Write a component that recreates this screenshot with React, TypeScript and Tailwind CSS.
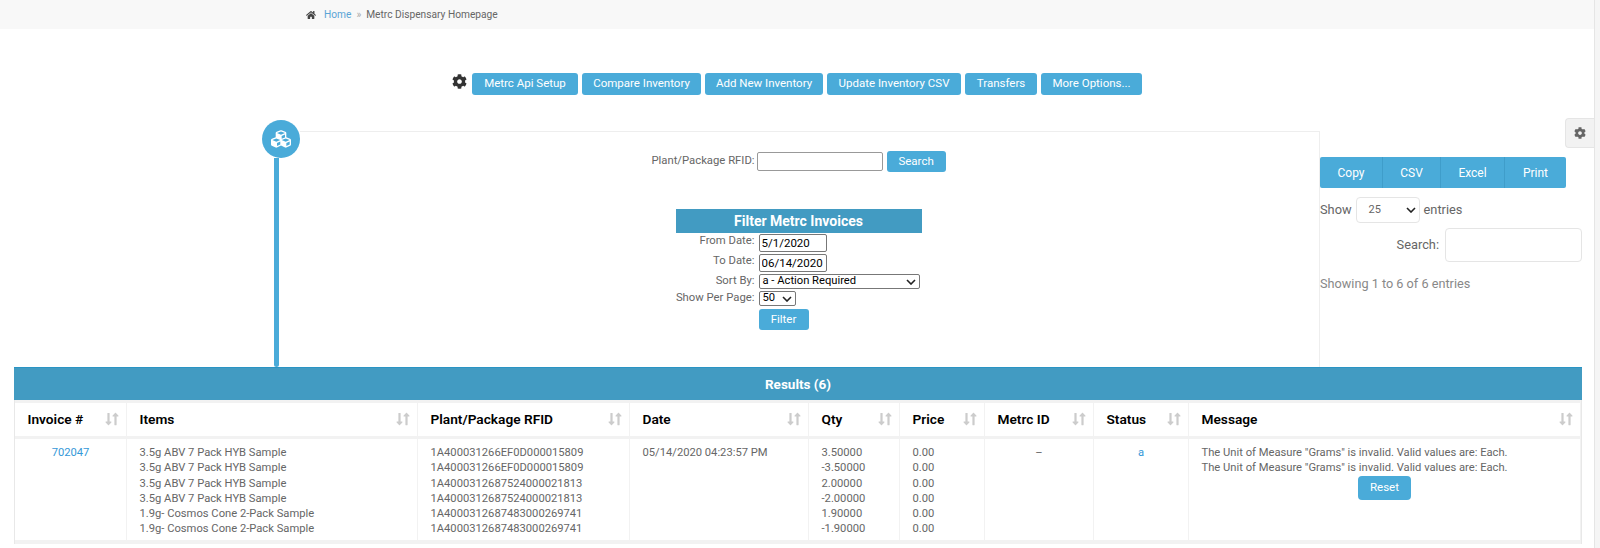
import { FaCog, FaCubes, FaHome, FaLongArrowAltDown, FaLongArrowAltUp } from "react-icons/fa";

const toolbarButtons = [
  { label: "Metrc Api Setup", width: "w-[106px]" },
  { label: "Compare Inventory", width: "w-[119px]" },
  { label: "Add New Inventory", width: "w-[118px]" },
  { label: "Update Inventory CSV", width: "w-[134px]" },
  { label: "Transfers", width: "w-[72px]" },
  { label: "More Options...", width: "w-[101px]" },
];

const exportButtons = [
  { label: "Copy", width: "w-[63px]" },
  { label: "CSV", width: "w-[58px]" },
  { label: "Excel", width: "w-[64px]" },
  { label: "Print", width: "w-[61px]" },
];

const columns = [
  { label: "Invoice #", width: "w-[112px]" },
  { label: "Items", width: "w-[291px]" },
  { label: "Plant/Package RFID", width: "w-[212px]" },
  { label: "Date", width: "w-[179px]" },
  { label: "Qty", width: "w-[91px]" },
  { label: "Price", width: "w-[85px]" },
  { label: "Metrc ID", width: "w-[109px]" },
  { label: "Status", width: "w-[95px]" },
  { label: "Message", width: "w-[392px]" },
];

const lines = [
  { item: "3.5g ABV 7 Pack HYB Sample", rfid: "1A400031266EF0D000015809", qty: "3.50000" },
  { item: "3.5g ABV 7 Pack HYB Sample", rfid: "1A400031266EF0D000015809", qty: "-3.50000" },
  { item: "3.5g ABV 7 Pack HYB Sample", rfid: "1A4000312687524000021813", qty: "2.00000" },
  { item: "3.5g ABV 7 Pack HYB Sample", rfid: "1A4000312687524000021813", qty: "-2.00000" },
  { item: "1.9g- Cosmos Cone 2-Pack Sample", rfid: "1A4000312687483000269741", qty: "1.90000" },
  { item: "1.9g- Cosmos Cone 2-Pack Sample", rfid: "1A4000312687483000269741", qty: "-1.90000" },
];

const message = 'The Unit of Measure "Grams" is invalid. Valid values are: Each.';
const cell = "h-[105px] border-b-[4px] border-r border-[#f2f2f2] align-top pt-[6px] px-[12.5px]";
const label = "justify-self-end whitespace-nowrap leading-[13px]";
const dateInput = "mb-[2px] h-[18px] w-[68px] rounded-[2px] border border-[#777] px-[2px] text-[11.5px] text-black";

export default function App() {
  return (
    <div className="flex h-[548px] w-[1600px] overflow-hidden bg-white font-['Roboto',sans-serif] text-[#666]">
      <div className="relative w-[1594px] shrink-0">
        {/* breadcrumb */}
        <div className="flex h-[29px] items-center bg-[#f8f8f8] pl-[306px] text-[10.2px]">
          <FaHome className="h-[10px] w-[10px] text-[#444]" />
          <a className="ml-[8px] text-[#5aa5d6]">Home</a>
          <span className="mx-[5px] text-[#aaa]">»</span>
          <span>Metrc Dispensary Homepage</span>
        </div>

        {/* toolbar */}
        <div className="mt-[44px] flex h-[22px] items-start justify-center gap-[4px]">
          <FaCog className="mr-[1px] mt-[1px] h-[15px] w-[15px] text-[#333]" />
          {toolbarButtons.map((b) => (
            <button key={b.label} className={`h-[22px] rounded-[3px] bg-[#4aabd9] text-[11.5px] font-normal text-white ${b.width}`}>
              {b.label}
            </button>
          ))}
        </div>

        {/* main */}
        <div className="mt-[25px] flex h-[247px]">
          <div className="ml-[262px] flex w-[38px] shrink-0 flex-col">
            <div className="flex h-[38px] w-[38px] items-center justify-center rounded-full bg-[#4aabd9]">
              <FaCubes className="h-[20px] w-[20px] text-white" />
            </div>
            <div className="ml-[12px] w-[5px] flex-1 rounded-b-[3px] bg-[#4aabd9]" />
          </div>

          <div className="mt-[11px] flex w-[1020px] shrink-0 flex-col items-center border-r border-t border-[#eeeeee] pr-[22px] pt-[19px] text-[11.3px]">
            <div className="flex items-center">
              <span>Plant/Package RFID:</span>
              <input className="ml-[2px] h-[19px] w-[126px] rounded-[2px] border border-[#999] bg-white" />
              <button className="ml-[4px] h-[21px] w-[59px] rounded-[3px] bg-[#4aabd9] text-[11.5px] font-normal text-white">Search</button>
            </div>

            <div className="mt-[37px] w-[246px]">
              <div className="flex h-[24px] items-center justify-center bg-[#429bc2] text-[14px] font-bold text-white">
                Filter Metrc Invoices
              </div>
              <div className="grid grid-cols-[79px_1fr] gap-x-[4px] pt-[1px]">
                <label className={label}>From Date:</label>
                <input readOnly value="5/1/2020" className={dateInput} />
                <label className={label}>To Date:</label>
                <input readOnly value="06/14/2020" className={dateInput} />
                <label className={label}>Sort By:</label>
                <div className="mb-[2px] flex h-[15px] w-[161px] items-center justify-between rounded-[2px] border border-[#777] px-[3px] text-[11.2px] text-black">
                  <span>a - Action Required</span>
                  <Chevron />
                </div>
                <label className={label}>Show Per Page:</label>
                <div className="flex h-[15px] w-[37px] items-center justify-between rounded-[2px] border border-[#777] px-[3px] text-[11.2px] text-black">
                  <span>50</span>
                  <Chevron />
                </div>
                <div />
                <button className="mt-[3px] h-[21px] w-[50px] rounded-[3px] bg-[#4aabd9] text-[11.5px] font-normal text-white">Filter</button>
              </div>
            </div>
          </div>

          <div className="mt-[37px] w-[262px] shrink-0 text-[12.8px]">
            <div className="flex h-[31px] w-[246px] overflow-hidden rounded-[2px] bg-[#4aabd9]">
              {exportButtons.map((b) => (
                <button key={b.label} className={`border-r border-[#3f9dca] text-[12px] font-normal text-white last:border-r-0 ${b.width}`}>
                  {b.label}
                </button>
              ))}
            </div>
            <div className="mt-[9px] flex items-center">
              <span>Show</span>
              <div className="mx-[4px] flex h-[26px] w-[64px] items-center justify-between rounded-[4px] border border-[#e5e5e5] pl-[12px] pr-[3px] text-[11px]">
                <span>25</span>
                <Chevron />
              </div>
              <span>entries</span>
            </div>
            <div className="mt-[5px] flex items-center justify-end">
              <span className="mr-[6px]">Search:</span>
              <input className="h-[34px] w-[137px] rounded-[4px] border border-[#e5e5e5]" />
            </div>
            <div className="mt-[12px] text-[12.7px] text-[#888]">Showing 1 to 6 of 6 entries</div>
          </div>
        </div>

        {/* results */}
        <div className="ml-[14px] w-[1568px]">
          <div className="flex h-[33px] items-center justify-center border-t border-[#2a94c4] bg-[#429bc2] text-[13.5px] font-bold text-white">
            Results (6)
          </div>
          <table className="w-full table-fixed border-separate border-spacing-0 border-x border-[#e8e8e8]">
            <thead>
              <tr>
                {columns.map((c) => (
                  <th key={c.label} className={`h-[39px] border-y-[3px] border-r border-[#f2f2f2] px-[12.5px] text-left text-[13.7px] font-semibold text-black ${c.width}`}>
                    <div className="flex items-center justify-between">
                      <span>{c.label}</span>
                      <span className="-mr-[5px] flex text-[#ccc]">
                        <FaLongArrowAltDown className="h-[16px] w-[7px]" />
                        <FaLongArrowAltUp className="h-[16px] w-[7px]" />
                      </span>
                    </div>
                  </th>
                ))}
              </tr>
            </thead>
            <tbody className="text-[11.2px] leading-[15.3px]">
              <tr>
                <td className={`${cell} text-center text-[#3498d8]`}>702047</td>
                <td className={cell}>{lines.map((l, i) => <div key={i}>{l.item}</div>)}</td>
                <td className={cell}>{lines.map((l, i) => <div key={i}>{l.rfid}</div>)}</td>
                <td className={cell}>05/14/2020 04:23:57 PM</td>
                <td className={cell}>{lines.map((l, i) => <div key={i}>{l.qty}</div>)}</td>
                <td className={cell}>{lines.map((l, i) => <div key={i}>0.00</div>)}</td>
                <td className={`${cell} text-center`}>–</td>
                <td className={`${cell} text-center text-[#3498d8]`}>a</td>
                <td className={cell}>
                  <div>{message}</div>
                  <div>{message}</div>
                  <div className="text-center">
                    <button className="h-[24px] w-[53px] rounded-[4px] bg-[#4aabd9] text-[11.5px] font-normal text-white">Reset</button>
                  </div>
                </td>
              </tr>
            </tbody>
          </table>
        </div>

        {/* settings tab */}
        <div className="absolute right-0 top-[118px] flex h-[30px] w-[29px] items-center justify-center rounded-l-[4px] border border-r-0 border-[#e5e5e5] bg-[#f2f2f2]">
          <FaCog className="h-[12px] w-[12px] text-[#666]" />
        </div>
      </div>
      <div className="flex-1 border-l border-[#e5e5e5] bg-[#f5f5f5]" />
    </div>
  );
}

function Chevron() {
  return (
    <svg viewBox="0 0 10 6" className="h-[6px] w-[10px] shrink-0">
      <path d="M1 1l4 4 4-4" fill="none" stroke="#222" strokeWidth="1.6" />
    </svg>
  );
}
